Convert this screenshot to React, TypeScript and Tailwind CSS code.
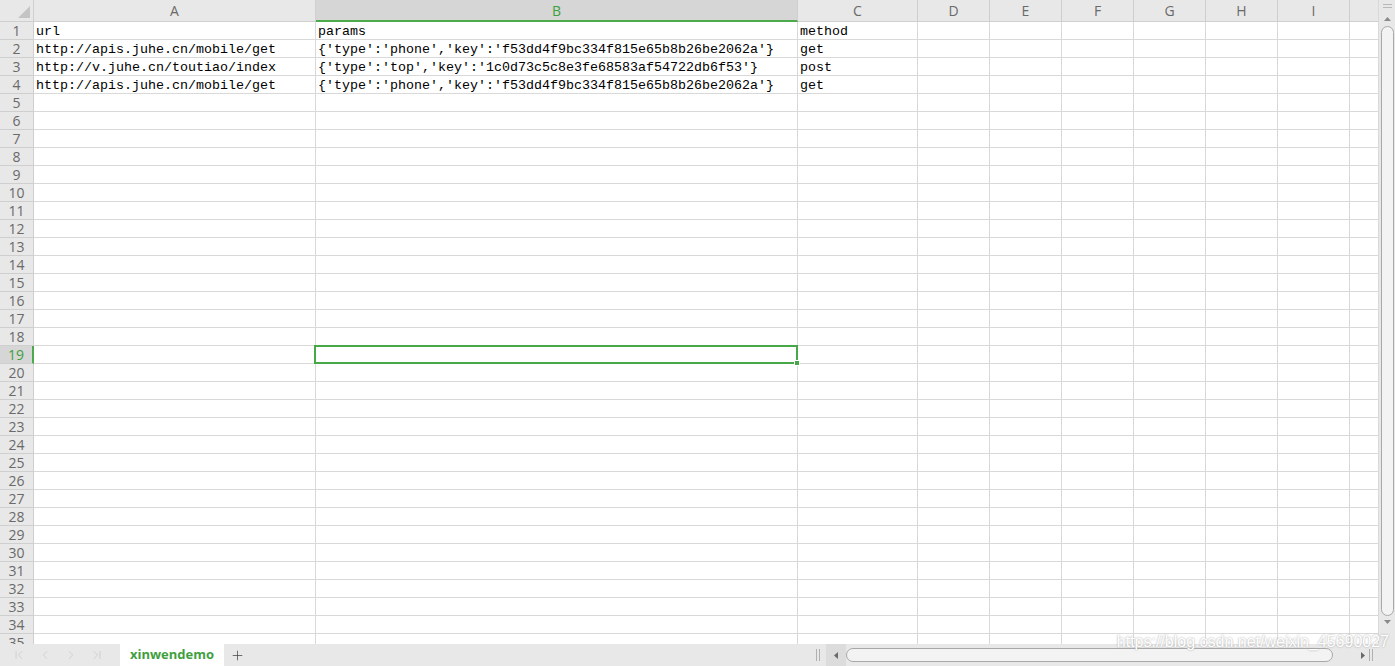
import { ChevronFirst, ChevronLeft, ChevronRight, ChevronLast, Plus } from 'lucide-react';

const cols = ['A', 'B', 'C', 'D', 'E', 'F', 'G', 'H', 'I', 'J'];
const widths = ['w-[282px]', 'w-[482px]', 'w-[120px]', 'w-[72px]', 'w-[72px]', 'w-[72px]', 'w-[72px]', 'w-[72px]', 'w-[72px]', 'w-[72px]'];

const data: Record<number, string[]> = {
  1: ['url', 'params', 'method'],
  2: ['http://apis.juhe.cn/mobile/get', "{'type':'phone','key':'f53dd4f9bc334f815e65b8b26be2062a'}", 'get'],
  3: ['http://v.juhe.cn/toutiao/index', "{'type':'top','key':'1c0d73c5c8e3fe68583af54722db6f53'}", 'post'],
  4: ['http://apis.juhe.cn/mobile/get', "{'type':'phone','key':'f53dd4f9bc334f815e65b8b26be2062a'}", 'get'],
};

const rows = Array.from({ length: 35 }, (_, i) => i + 1);
const headFont = "font-['Open_Sans','Liberation_Sans',sans-serif]";

export default function App() {
  return (
    <div className="relative flex h-[666px] w-[1395px] flex-col overflow-hidden bg-white">
      <div className="flex min-h-0 flex-1">
        {/* sheet */}
        <div className="min-w-0 flex-1 overflow-hidden">
          {/* column header */}
          <div className={`flex h-[22px] bg-[#e8e8e8] text-[14px] text-[#6a6a6a] ${headFont}`}>
            <div className="relative w-[34px] shrink-0 border-r border-b border-[#cfcfcf]">
              <svg className="absolute left-[18px] top-[6px]" width="12" height="12" viewBox="0 0 12 12">
                <polygon points="12,0 12,12 0,12" fill="#c4c4c4" />
              </svg>
            </div>
            {cols.map((c, i) => (
              <div
                key={c}
                className={`flex shrink-0 items-center justify-center border-r ${widths[i]} ${
                  c === 'B'
                    ? 'border-b-2 border-r-[#cfcfcf] border-b-[#4caa4c] bg-[#d6d6d6] text-[#3f9f3f]'
                    : 'border-b border-[#cfcfcf]'
                }`}
              >
                {c === 'J' ? '' : c}
              </div>
            ))}
          </div>

          {rows.map((r) => {
            const sel = r === 19;
            return (
              <div key={r} className="flex h-[18px]">
                <div
                  className={`flex w-[34px] shrink-0 items-center justify-center border-b text-[14px] leading-none ${headFont} ${
                    sel
                      ? 'border-r-2 border-r-[#4caa4c] border-b-[#cfcfcf] bg-[#d6d6d6] text-[#3f9f3f]'
                      : 'border-r border-[#cfcfcf] bg-[#e8e8e8] text-[#6a6a6a]'
                  }`}
                >
                  {r}
                </div>
                {cols.map((c, i) => (
                  <div
                    key={c}
                    className={`relative shrink-0 overflow-visible whitespace-nowrap border-r border-b border-[#d9d9d9] pt-[2px] pl-[2px] font-['Liberation_Mono',monospace] text-[13.33px] leading-[15px] text-black ${widths[i]}`}
                  >
                    {data[r]?.[i] ?? ''}
                    {sel && c === 'B' && (
                      <div className="absolute -top-[1px] -left-[2px] -right-[1px] -bottom-[1px] z-10 border-2 border-[#46a846]">
                        <div className="absolute -right-[4px] -bottom-[4px] h-[6px] w-[6px] border border-white bg-[#46a846]" />
                      </div>
                    )}
                  </div>
                ))}
              </div>
            );
          })}
        </div>

        {/* vertical scrollbar */}
        <div className="flex w-[17px] shrink-0 flex-col items-center border-l border-[#d9d9d9] bg-[#e8e8e8]">
          <div className="mt-[4px] flex flex-col gap-[2px]">
            <div className="h-px w-[9px] bg-[#b8b8b8]" />
            <div className="h-px w-[9px] bg-[#b8b8b8]" />
          </div>
          <svg className="mt-[9px]" width="7" height="4" viewBox="0 0 7 4">
            <polygon points="3.5,0 7,4 0,4" fill="#8a8a8a" />
          </svg>
          <div className="mt-[5px] h-[590px] w-[13px] rounded-full border border-[#a8a8a8] bg-[#f3f3f3]" />
          <svg className="mt-[4px]" width="7" height="4" viewBox="0 0 7 4">
            <polygon points="0,0 7,0 3.5,4" fill="#8a8a8a" />
          </svg>
        </div>
      </div>

      {/* bottom bar */}
      <div className="flex h-[22px] shrink-0 items-center bg-[#e8e8e8]">
        <div className="flex w-[120px] items-center gap-[12px] pl-[12px] text-[#c6c6c6]">
          <ChevronFirst size={14} strokeWidth={1.2} />
          <ChevronLeft size={14} strokeWidth={1.2} />
          <ChevronRight size={14} strokeWidth={1.2} />
          <ChevronLast size={14} strokeWidth={1.2} />
        </div>
        <div className={`flex h-full w-[104px] items-center justify-center bg-white text-[13px] font-bold text-[#3f9f3f] ${headFont}`}>
          xinwendemo
        </div>
        <div className="ml-[6px] text-[#444]">
          <Plus size={15} strokeWidth={1.2} />
        </div>
        <div className="flex-1" />
        <div className="mr-[6px] flex gap-[2px]">
          <div className="h-[12px] w-px bg-[#b0b0b0]" />
          <div className="h-[12px] w-px bg-[#b0b0b0]" />
        </div>
        <div className="flex h-full w-[20px] items-center justify-center bg-[#dcdcdc]">
          <svg width="4" height="7" viewBox="0 0 4 7">
            <polygon points="4,0 4,7 0,3.5" fill="#6a6a6a" />
          </svg>
        </div>
        <div className="h-[14px] w-[487px] rounded-full border border-[#a8a8a8] bg-[#f3f3f3]" />
        <div className="w-[28px]" />
        <svg width="4" height="7" viewBox="0 0 4 7">
          <polygon points="0,0 4,3.5 0,7" fill="#6a6a6a" />
        </svg>
        <div className="ml-[4px] mr-[22px] flex gap-[2px]">
          <div className="h-[12px] w-px bg-[#b0b0b0]" />
          <div className="h-[12px] w-px bg-[#b0b0b0]" />
        </div>
      </div>

      {/* watermark */}
      <div className="pointer-events-none absolute right-[6px] bottom-[12px] font-['Liberation_Sans',sans-serif] text-[16px] text-white [text-shadow:0_0_2px_#9a9a9a]">
        https://blog.csdn.net/weixin_45690027
      </div>
    </div>
  );
}
